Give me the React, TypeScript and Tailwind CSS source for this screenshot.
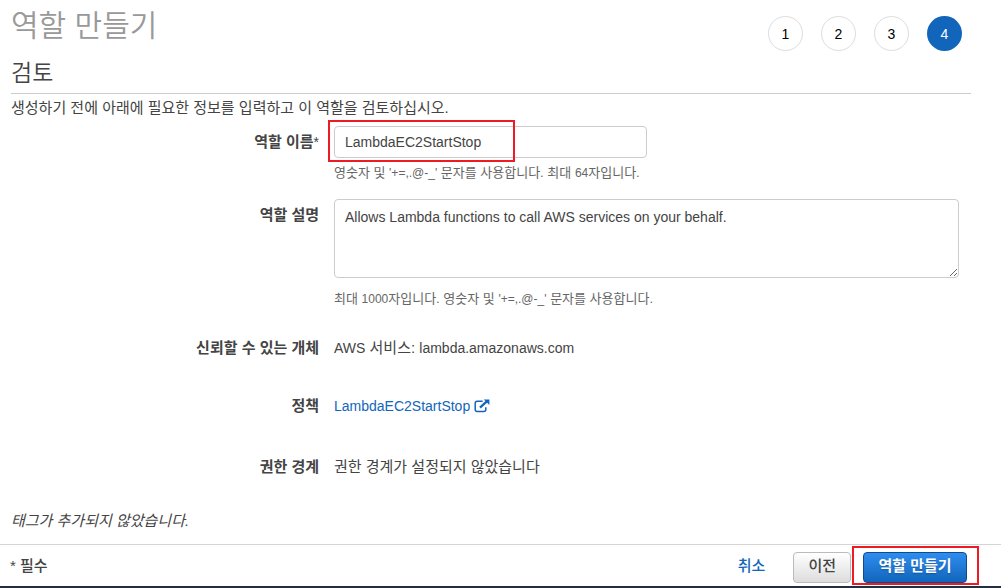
import React, { useState } from "react";

const steps = [1, 2, 3, 4];
const currentStep = 4;

function Latin({ children }: { children: React.ReactNode }) {
  return <span className="text-sm leading-none">{children}</span>;
}

function SmallLatin({ children }: { children: React.ReactNode }) {
  return <span className="text-xs leading-none">{children}</span>;
}

function ExternalIcon() {
  return (
    <svg viewBox="0 0 16 14" className="h-3.5 w-4" fill="none" aria-hidden="true">
      <path
        d="M8.6 2.2H3.2Q1.2 2.2 1.2 4.2V10.6Q1.2 12.6 3.2 12.6H9.8Q11.8 12.6 11.8 10.6V8.2"
        stroke="currentColor"
        strokeWidth="1.5"
      />
      <path d="M6 8.6L12.8 2.4" stroke="currentColor" strokeWidth="2.2" />
      <path d="M9.8 0.4H15.4V6Z" fill="currentColor" />
    </svg>
  );
}

const rowClass = "grid grid-cols-[308px_minmax(0,1fr)] gap-x-[15px]";
const labelClass = "text-right font-bold";

export default function App() {
  const [name, setName] = useState("LambdaEC2StartStop");
  const [description, setDescription] = useState(
    "Allows Lambda functions to call AWS services on your behalf."
  );

  return (
    <div className="bg-white font-['Liberation_Sans','Noto_Sans_CJK_KR',sans-serif] text-[15px] leading-5 text-[#444444]">
      <main className="pt-2 pr-[30px] pb-[13px] pl-[11px]">
        <header className="flex items-start justify-between">
          <h1 className="text-[30px] leading-9 font-[350] text-[#999999]">역할 만들기</h1>
          <ol className="mt-2 mr-[9px] flex gap-[18px] text-sm text-black">
            {steps.map((step) => (
              <li
                key={step}
                aria-current={step === currentStep ? "step" : undefined}
                className={
                  step === currentStep
                    ? "flex size-[35px] items-center justify-center rounded-full bg-[#1166bb] text-white"
                    : "flex size-[35px] items-center justify-center rounded-full border border-[#dddddd]"
                }
              >
                {step}
              </li>
            ))}
          </ol>
        </header>

        <h2 className="mt-[7px] border-b border-[#cccccc] pb-[5px] text-[23px] leading-[30px] font-[350]">
          검토
        </h2>
        <p className="mt-1">생성하기 전에 아래에 필요한 정보를 입력하고 이 역할을 검토하십시오.</p>

        <div className={`${rowClass} mt-2`}>
          <label htmlFor="role-name" className={`${labelClass} pt-[6px]`}>
            역할 이름<span className="text-sm leading-none font-normal">*</span>
          </label>
          <div className="relative pr-3">
            <input
              id="role-name"
              value={name}
              onChange={(e) => setName(e.target.value)}
              className="block h-8 w-1/2 rounded border border-[#cccccc] px-[10px] text-sm outline-none"
            />
            <div className="pointer-events-none absolute -top-[6px] -left-[6px] h-[42px] w-[187px] border-2 border-[#ed1c24]" />
            <p className="mt-[5px] text-[13px] text-[#666666]">
              영숫자 및 <SmallLatin>'+=,.@-_'</SmallLatin> 문자를 사용합니다. 최대{" "}
              <SmallLatin>64</SmallLatin>자입니다.
            </p>
          </div>
        </div>

        <div className={`${rowClass} mt-4`}>
          <label htmlFor="role-description" className={`${labelClass} pt-[6px]`}>
            역할 설명
          </label>
          <div className="pr-3">
            <textarea
              id="role-description"
              value={description}
              onChange={(e) => setDescription(e.target.value)}
              className="block h-[79px] w-full resize rounded border border-[#cccccc] px-[10px] py-[7px] text-sm outline-none"
            />
            <p className="mt-[11px] text-[13px] text-[#666666]">
              최대 <SmallLatin>1000</SmallLatin>자입니다. 영숫자 및{" "}
              <SmallLatin>'+=,.@-_'</SmallLatin> 문자를 사용합니다.
            </p>
          </div>
        </div>

        <dl>
          <div className={`${rowClass} mt-[29px]`}>
            <dt className={labelClass}>신뢰할 수 있는 개체</dt>
            <dd>
              <Latin>AWS</Latin> 서비스: <Latin>lambda.amazonaws.com</Latin>
            </dd>
          </div>
          <div className={`${rowClass} mt-[38px]`}>
            <dt className={labelClass}>정책</dt>
            <dd>
              <a href="#policy" className="inline-flex items-center gap-1 text-sm text-[#1166bb]">
                LambdaEC2StartStop
                <ExternalIcon />
              </a>
            </dd>
          </div>
          <div className={`${rowClass} mt-[41px]`}>
            <dt className={labelClass}>권한 경계</dt>
            <dd>권한 경계가 설정되지 않았습니다</dd>
          </div>
        </dl>

        <p className="mt-[34px] italic">태그가 추가되지 않았습니다.</p>
      </main>

      <footer className="flex h-11 items-center justify-between border-t border-b-2 border-t-[#d5d5d5] border-b-[#232f3e] pr-[34px] pl-[10px]">
        <span className="font-medium">* 필수</span>
        <div className="flex items-center pt-1">
          <button type="button" className="mr-7 pb-1 font-medium text-[#1166bb]">
            취소
          </button>
          <button
            type="button"
            className="mr-3 h-[31px] rounded border border-[#bbbbbb] bg-linear-to-b from-white to-[#dddddd] px-[14px] pb-1 font-medium"
          >
            이전
          </button>
          <div className="relative">
            <button
              type="button"
              className="block h-[31px] min-w-[104px] rounded border border-[#0f4b8c] bg-linear-to-b from-[#2e8df0] to-[#1166bb] px-[14px] pb-1 font-bold text-white text-shadow-sm"
            >
              역할 만들기
            </button>
            <div className="pointer-events-none absolute -top-[6px] -right-3 -bottom-[2px] -left-[11px] border-2 border-[#ed1c24]" />
          </div>
        </div>
      </footer>
    </div>
  );
}
